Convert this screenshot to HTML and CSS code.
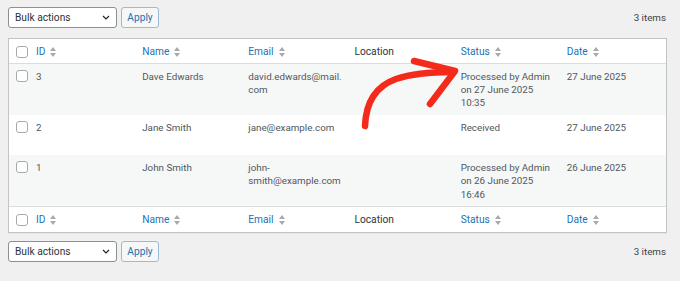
FILE: index.html
```html
<!DOCTYPE html>
<html>
<head>
<meta charset="utf-8">
<link rel="stylesheet" href="styles.css">
</head>
<body>
<div class="wrap">
  <div class="tablenav">
    <div class="actions">
      <div class="select">Bulk actions
        <svg class="chev" width="8" height="5" viewBox="0 0 8 5"><path d="M1 1l3 3 3-3" fill="none" stroke="#1d2327" stroke-width="1.2"/></svg>
      </div>
      <div class="button">Apply</div>
    </div>
    <div class="count">3 items</div>
  </div>

  <table class="list">
    <colgroup>
      <col class="c-check"><col><col><col><col><col><col>
    </colgroup>
    <thead>
      <tr>
        <th class="check"><span class="cb"></span></th>
        <th><a class="sort">ID<span class="ind"></span></a></th>
        <th><a class="sort">Name<span class="ind"></span></a></th>
        <th><a class="sort">Email<span class="ind"></span></a></th>
        <th>Location</th>
        <th><a class="sort">Status<span class="ind"></span></a></th>
        <th><a class="sort">Date<span class="ind"></span></a></th>
      </tr>
    </thead>
    <tbody>
      <tr class="alt">
        <td class="check"><span class="cb"></span></td>
        <td>3</td>
        <td>Dave Edwards<div class="row-actions"></div></td>
        <td>david.edwards@mail.<br>com</td>
        <td></td>
        <td>Processed by Admin<br>on 27 June 2025<br>10:35</td>
        <td>27 June 2025</td>
      </tr>
      <tr>
        <td class="check"><span class="cb"></span></td>
        <td>2</td>
        <td>Jane Smith<div class="row-actions"></div></td>
        <td>jane@example.com</td>
        <td></td>
        <td>Received</td>
        <td>27 June 2025</td>
      </tr>
      <tr class="alt">
        <td class="check"><span class="cb"></span></td>
        <td>1</td>
        <td>John Smith<div class="row-actions"></div></td>
        <td>john-<br>smith@example.com</td>
        <td></td>
        <td>Processed by Admin<br>on 26 June 2025<br>16:46</td>
        <td>26 June 2025</td>
      </tr>
    </tbody>
    <tfoot>
      <tr>
        <th class="check"><span class="cb"></span></th>
        <th><a class="sort">ID<span class="ind"></span></a></th>
        <th><a class="sort">Name<span class="ind"></span></a></th>
        <th><a class="sort">Email<span class="ind"></span></a></th>
        <th>Location</th>
        <th><a class="sort">Status<span class="ind"></span></a></th>
        <th><a class="sort">Date<span class="ind"></span></a></th>
      </tr>
    </tfoot>
  </table>

  <div class="tablenav bottom">
    <div class="actions">
      <div class="select">Bulk actions
        <svg class="chev" width="8" height="5" viewBox="0 0 8 5"><path d="M1 1l3 3 3-3" fill="none" stroke="#1d2327" stroke-width="1.2"/></svg>
      </div>
      <div class="button">Apply</div>
    </div>
    <div class="count">3 items</div>
  </div>

  <svg class="arrow" width="680" height="281" viewBox="0 0 680 281">
    <path d="M365 126 C366 101 376 86 396 79 C414 73 432 72 452 72" fill="none" stroke="#f42a1a" stroke-width="6.5" stroke-linecap="round"/>
    <path d="M414 61 L455 71 L430 104" fill="none" stroke="#f42a1a" stroke-width="6.5" stroke-linecap="round" stroke-linejoin="round"/>
  </svg>
</div>
</body>
</html>
```

FILE: styles.css
```css
* { box-sizing: border-box; }
html, body { margin: 0; padding: 0; }
body {
  background: #f0f0f1;
  font-family: Roboto, "Noto Sans", "Liberation Sans", sans-serif;
  font-size: 9.8px;
  color: #50575e;
  width: 680px;
  height: 281px;
  overflow: hidden;
}
.wrap {
  position: relative;
  padding: 7px 13px 0 8px;
  height: 281px;
}
.tablenav {
  display: flex;
  align-items: center;
  justify-content: space-between;
  height: 21px;
  margin-bottom: 10px;
}
.tablenav.bottom { margin: 8px 0 0; }
.actions { display: flex; gap: 4px; height: 21px; }
.select {
  width: 109px;
  height: 21px;
  background: #fff;
  border: 1px solid #8c8f94;
  border-radius: 3px;
  color: #2c3338;
  padding: 0 0 0 6px;
  display: flex;
  align-items: center;
  justify-content: space-between;
  font-size: 10.2px;
}
.chev { margin-right: 6px; }
.button {
  width: 38px;
  height: 21px;
  border: 1px solid #9bbad8;
  border-radius: 3px;
  background: #f6f7f7;
  color: #2271b1;
  display: flex;
  align-items: center;
  justify-content: center;
  font-size: 10.2px;
}
.count { color: #3c434a; padding-right: 1px; }

.list {
  width: 659px;
  border: 1px solid #c3c4c7;
  border-spacing: 0;
  border-collapse: separate;
  table-layout: fixed;
  background: #fff;
  box-shadow: 0 1px 1px rgba(0,0,0,.04);
}
.c-check { width: 20px; }
th, td {
  text-align: left;
  vertical-align: top;
  line-height: 13.3px;
  font-weight: 400;
  white-space: nowrap;
}
th {
  padding: 6px 7px 5px;
  color: #2c3338;
  height: 25px;
  font-size: 10.2px;
}
thead th { border-bottom: 1px solid #dcdcde; }
tfoot th { border-top: 1px solid #dcdcde; }
td { padding: 5.5px 7px; }
tr.alt td { background: #f6f7f7; }
th.check, td.check { padding-left: 7px; padding-right: 0; }
.cb {
  display: block;
  width: 12px;
  height: 12px;
  border: 1px solid #a7aaad;
  border-radius: 3px;
  background: #fff;
  margin-top: 0.5px;
}
.sort { color: #2271b1; display: inline-flex; align-items: center; gap: 5px; }
.ind {
  display: inline-block;
  width: 6px;
  height: 10px;
  position: relative;
}
.ind::before, .ind::after {
  content: "";
  position: absolute;
  left: 0;
  border-left: 3px solid transparent;
  border-right: 3px solid transparent;
}
.ind::before { top: 0; border-bottom: 4px solid #a7aaad; }
.ind::after { bottom: 0; border-top: 4px solid #a7aaad; }
.row-actions { height: 16px; }

.arrow {
  position: absolute;
  left: 0;
  top: 0;
  pointer-events: none;
}
```
